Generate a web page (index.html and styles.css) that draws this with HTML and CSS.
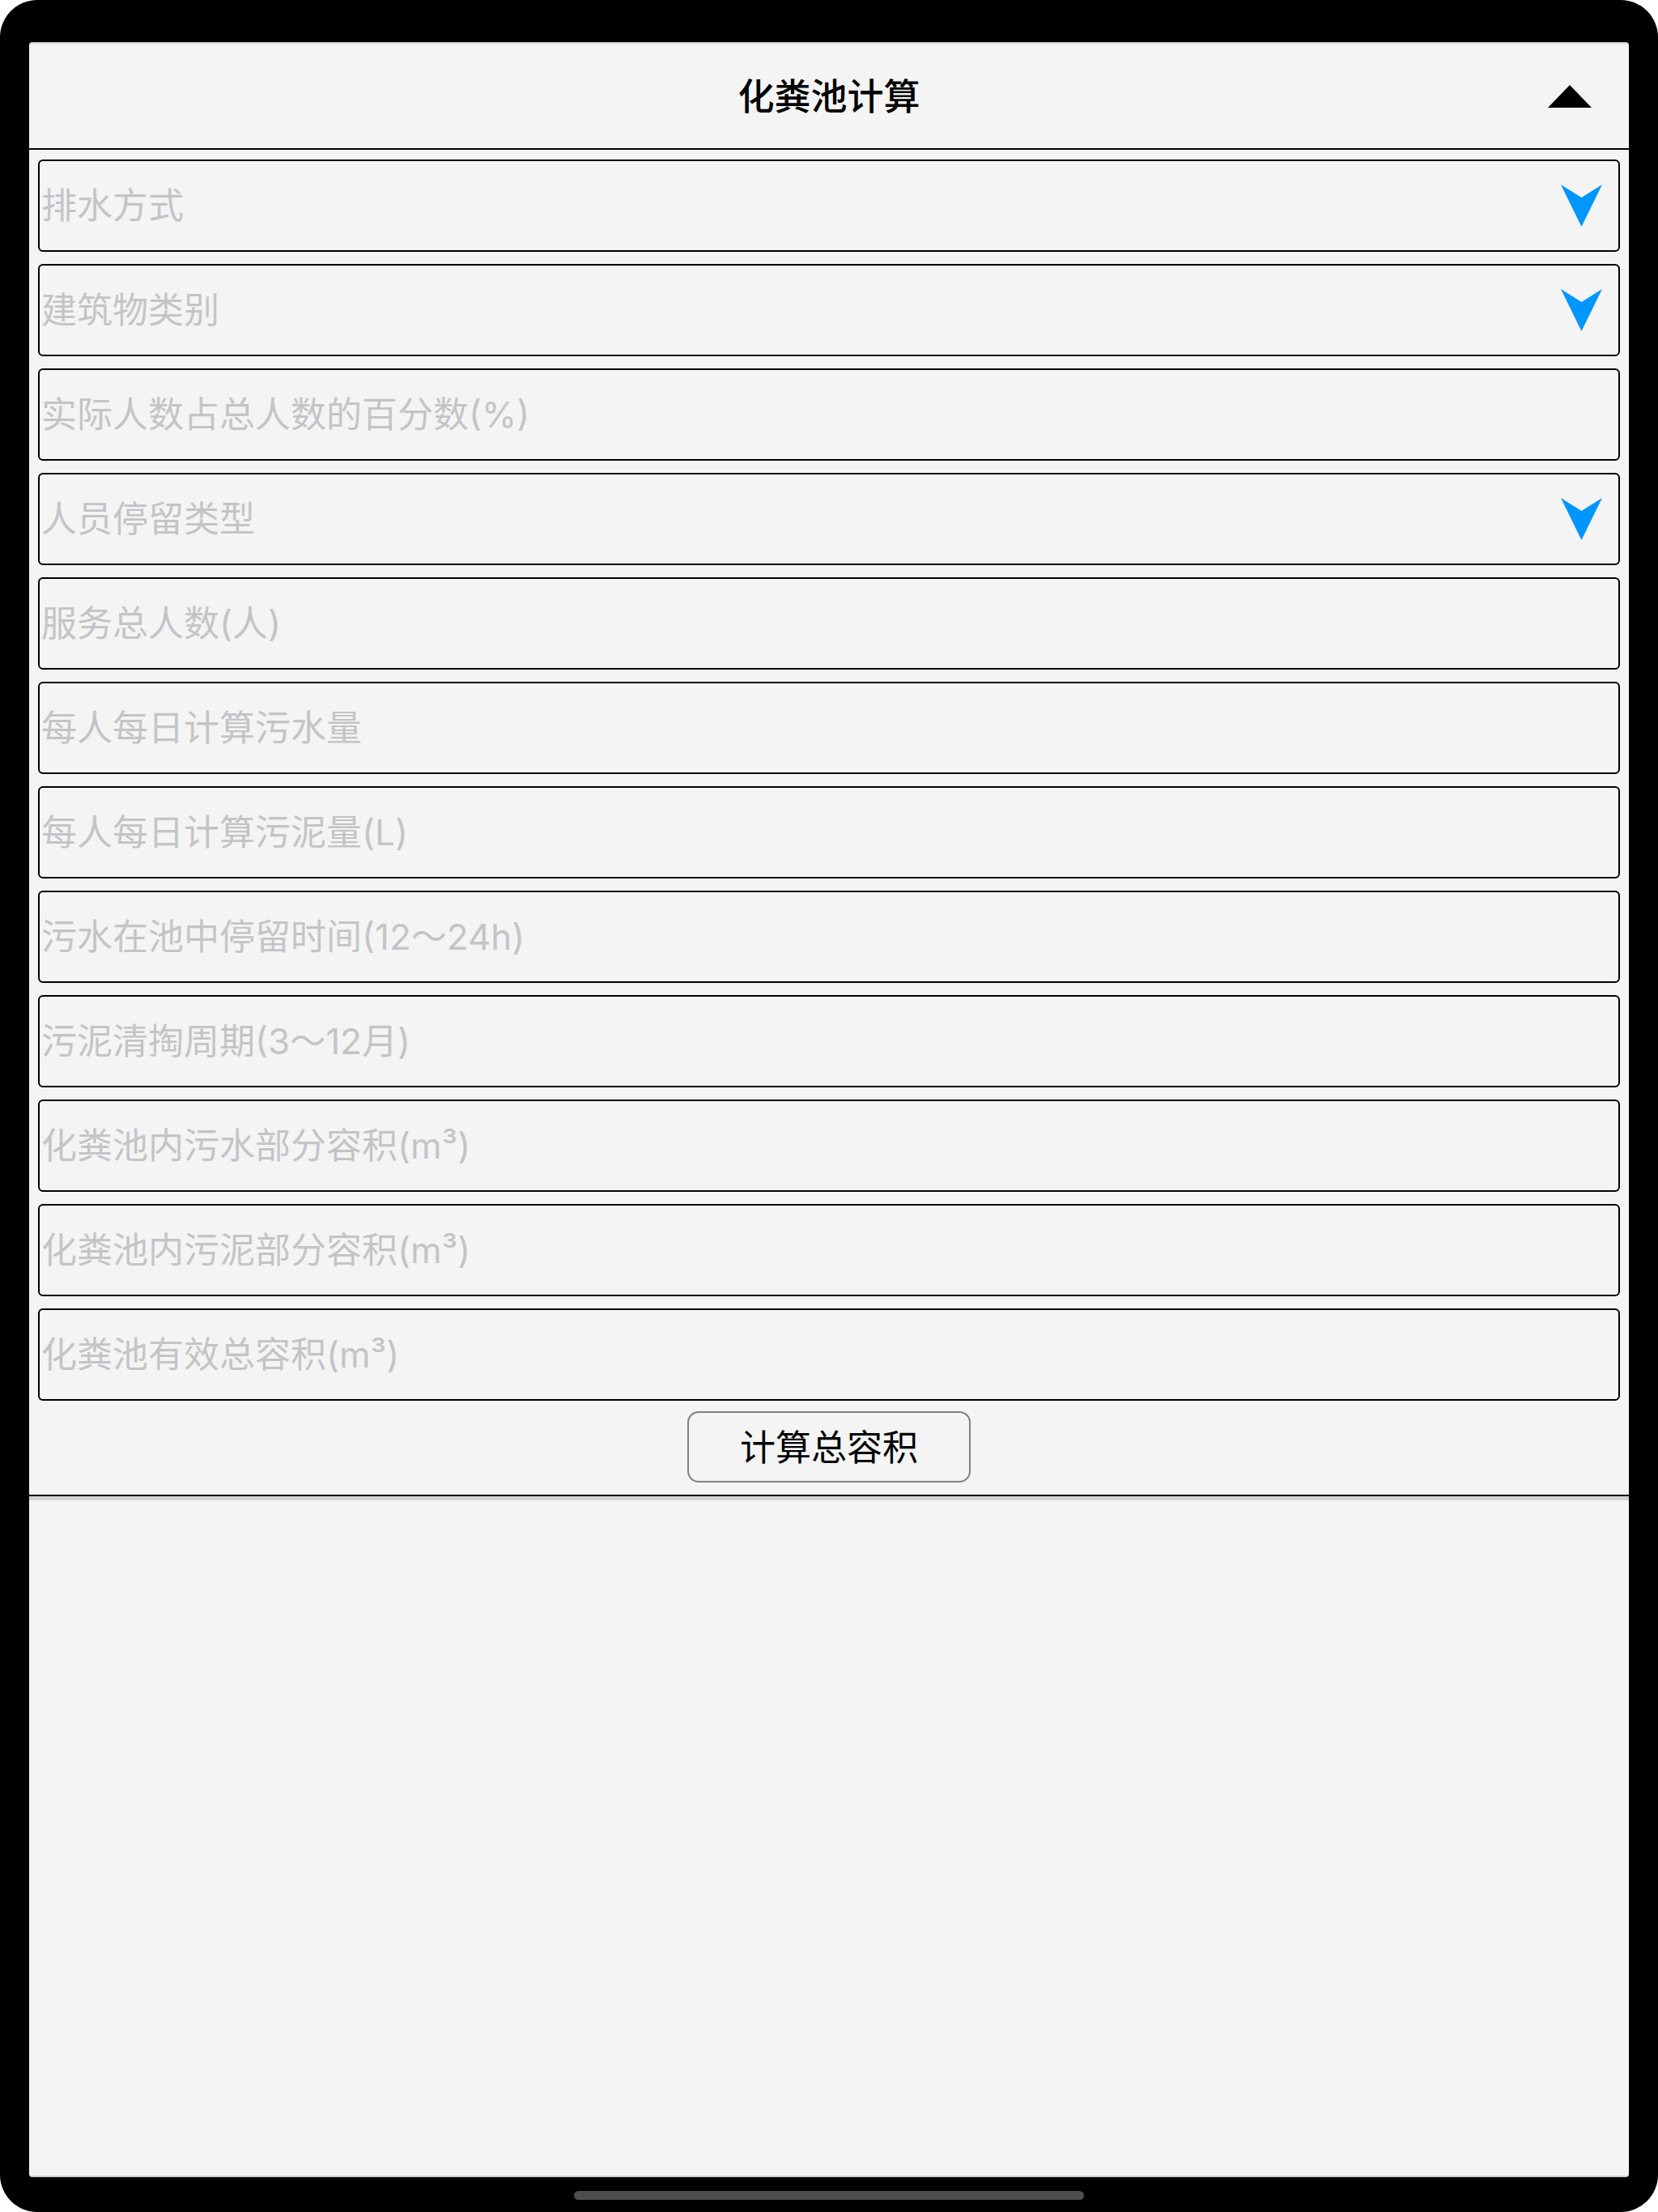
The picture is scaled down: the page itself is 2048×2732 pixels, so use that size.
FILE: index.html
```html
<!DOCTYPE html>
<html lang="zh-CN">
  <head>
    <meta charset="UTF-8">
    <meta name="viewport" content="width=device-width, initial-scale=1.0">
    <title>化粪池计算</title>
    <link rel="stylesheet" href="styles.css">
  </head>
  <body>
    <div class="device">
      <div class="screen">
        <div class="header">
          <span></span>
          <h1>化粪池计算</h1>
          <svg class="collapse" width="54" height="28" viewBox="0 0 54 28">
            <polygon points="0,28 27,0 54,28" fill="#000"/>
          </svg>
        </div>
        <div class="section">
          <div class="fields">
            <div class="field">
              <span class="placeholder">排水方式</span>
              <svg class="picker" width="51" height="52" viewBox="0 0 51 52"><path d="M0 0 L25.5 16 L51 0 L25.5 52 Z"/></svg>
            </div>
            <div class="field">
              <span class="placeholder">建筑物类别</span>
              <svg class="picker" width="51" height="52" viewBox="0 0 51 52"><path d="M0 0 L25.5 16 L51 0 L25.5 52 Z"/></svg>
            </div>
            <div class="field">
              <span class="placeholder">实际人数占总人数的百分数(%)</span>
            </div>
            <div class="field">
              <span class="placeholder">人员停留类型</span>
              <svg class="picker" width="51" height="52" viewBox="0 0 51 52"><path d="M0 0 L25.5 16 L51 0 L25.5 52 Z"/></svg>
            </div>
            <div class="field">
              <span class="placeholder">服务总人数(人)</span>
            </div>
            <div class="field">
              <span class="placeholder">每人每日计算污水量</span>
            </div>
            <div class="field">
              <span class="placeholder">每人每日计算污泥量(L)</span>
            </div>
            <div class="field">
              <span class="placeholder">污水在池中停留时间(12～24h)</span>
            </div>
            <div class="field">
              <span class="placeholder">污泥清掏周期(3～12月)</span>
            </div>
            <div class="field">
              <span class="placeholder">化粪池内污水部分容积(m³)</span>
            </div>
            <div class="field">
              <span class="placeholder">化粪池内污泥部分容积(m³)</span>
            </div>
            <div class="field">
              <span class="placeholder">化粪池有效总容积(m³)</span>
            </div>
          </div>
          <button class="calc-button">计算总容积</button>
        </div>
      </div>
      <div class="home-bar"></div>
    </div>
  </body>
</html>
```

FILE: styles.css
```css
:root {
  --screen-bg: #f4f4f4;
  --placeholder: #c4c4c7;
  --picker-blue: #0096ff;
  --edge-grey: #d2d2d6;
}

body {
  margin: 0;
  background-color: #fff;
  font-family: 'Inter', 'Noto Sans CJK SC', sans-serif;
}

.device {
  width: 2048px;
  height: 2732px;
  box-sizing: border-box;
  padding: 52px 36px 0 36px;
  background-color: #000;
  border-radius: 46px;
  display: flex;
  flex-direction: column;
}

.screen {
  height: 2637px;
  box-sizing: border-box;
  background-color: var(--screen-bg);
  border-top: 2px solid var(--edge-grey);
  border-bottom: 2px solid var(--edge-grey);
  border-radius: 4px;
}

.header {
  height: 129px;
  display: grid;
  grid-template-columns: 1fr auto 1fr;
  align-items: center;
  border-bottom: 2px solid #000;
}

.header h1 {
  margin: -4px 0 0;
  font-size: 45px;
  font-weight: 500;
  color: #000;
}

.collapse {
  justify-self: end;
  margin-right: 46px;
}

.section {
  padding-top: 12px;
  display: flex;
  flex-direction: column;
  align-items: center;
  border-bottom: 2px solid #000;
  box-shadow: 0 5px 0 var(--edge-grey);
}

.fields {
  align-self: stretch;
  padding: 0 11px;
  display: flex;
  flex-direction: column;
  gap: 15px;
}

.field {
  height: 114px;
  box-sizing: border-box;
  border: 2px solid #000;
  border-radius: 6px;
  padding: 0 20px 0 2px;
  display: flex;
  align-items: center;
  justify-content: space-between;
}

.placeholder {
  font-size: 44px;
  color: var(--placeholder);
  margin-top: -7px;
}

.picker {
  fill: var(--picker-blue);
}

.calc-button {
  margin: 13px 0 15px;
  width: 350px;
  height: 88px;
  border: 2px solid #808080;
  border-radius: 14px;
  background-color: var(--screen-bg);
  font-family: inherit;
  font-size: 44px;
  color: #000;
  padding: 0 0 4px;
}

.home-bar {
  width: 630px;
  height: 11px;
  margin: 17px auto 0;
  background-color: #4d4d4d;
  border-radius: 6px;
}
```
